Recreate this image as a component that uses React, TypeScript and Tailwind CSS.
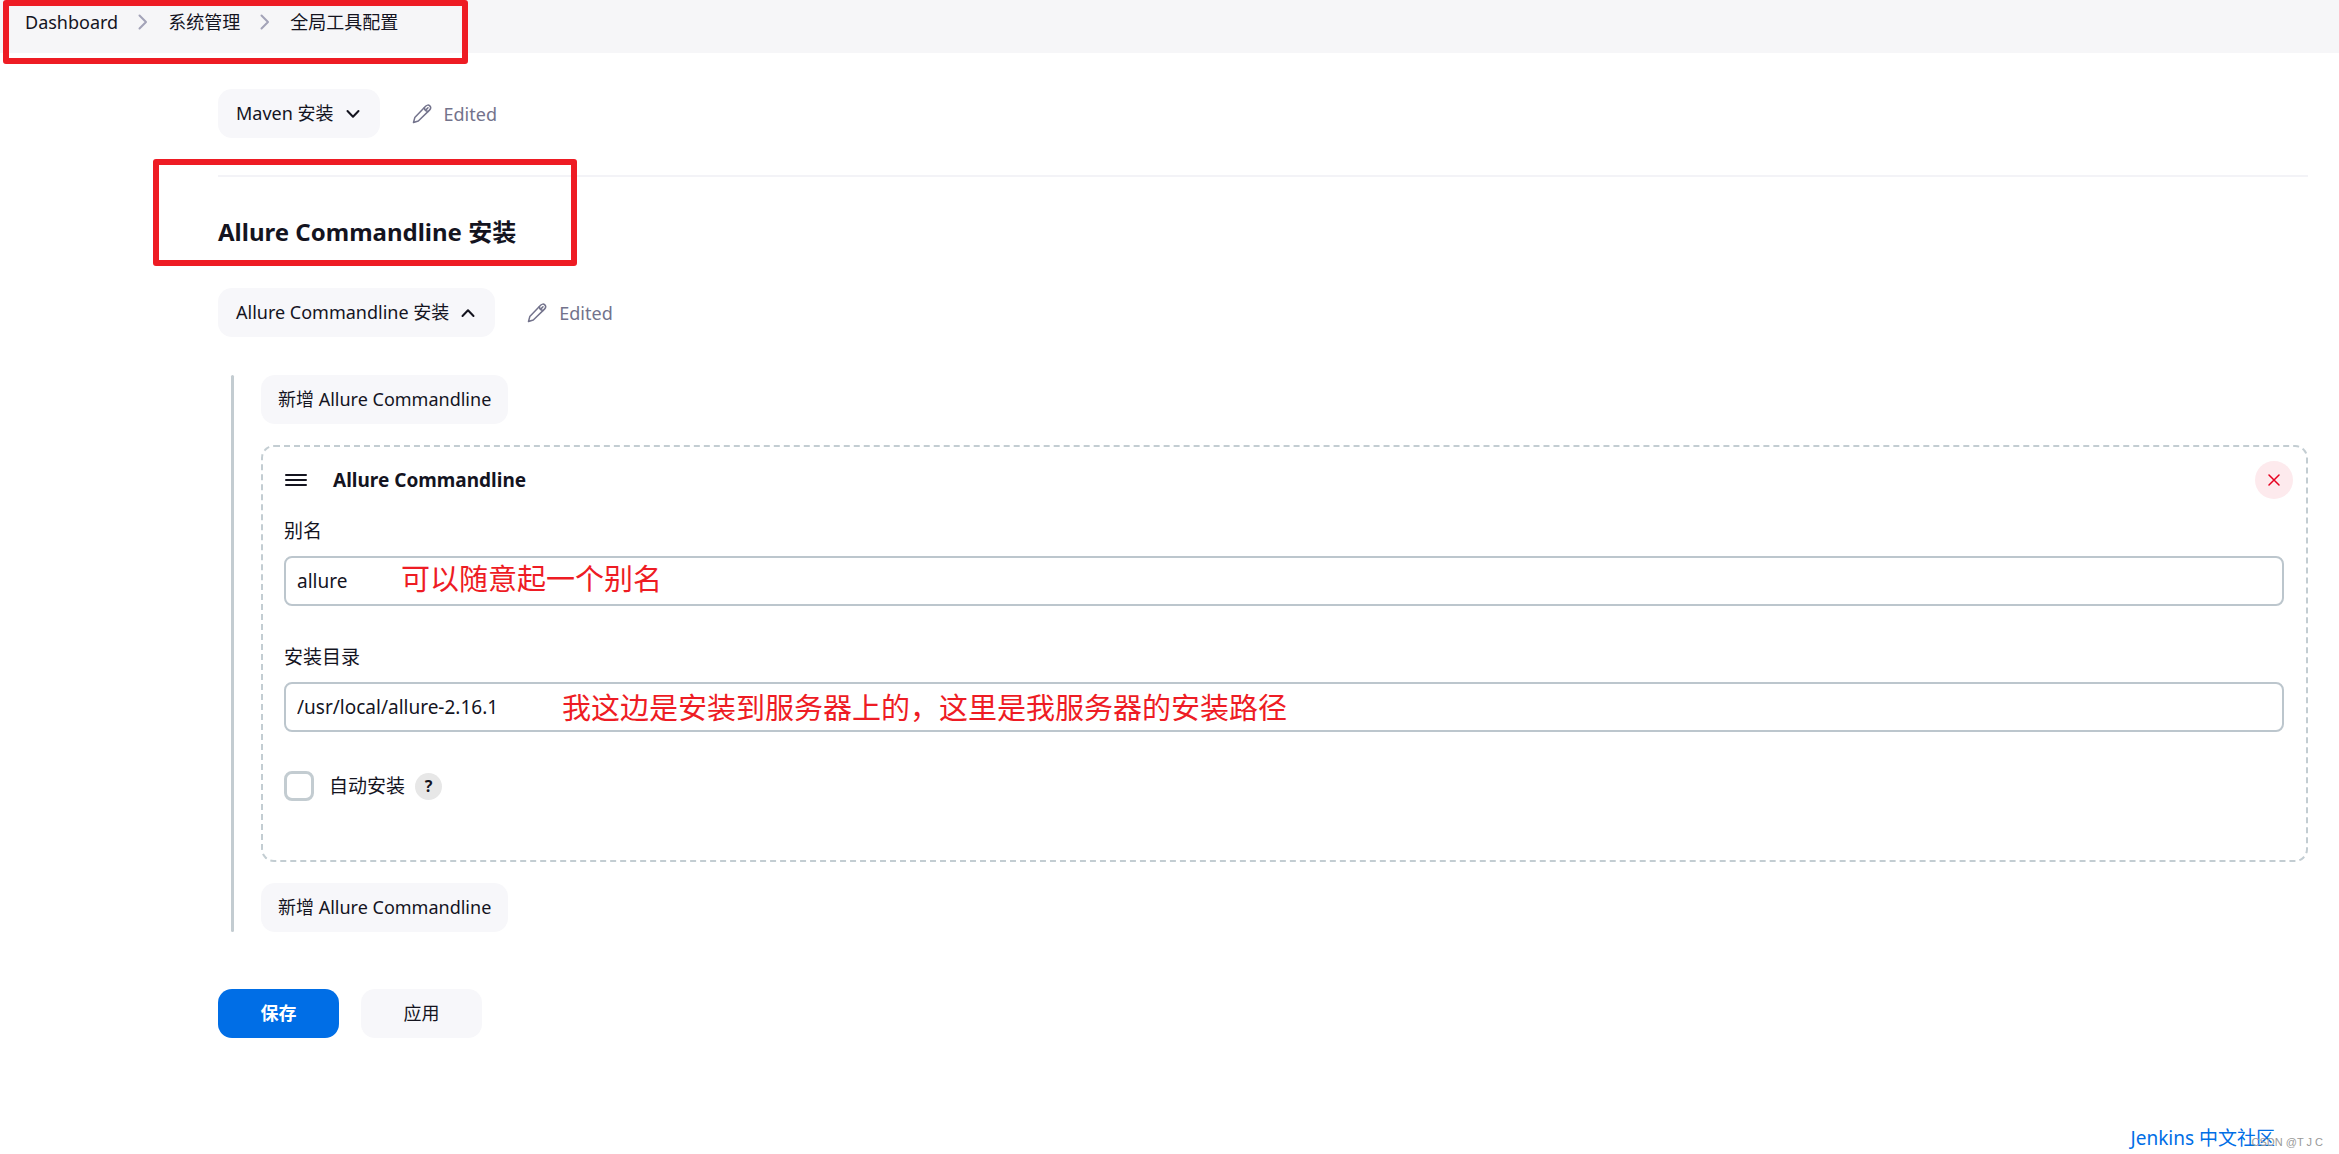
import { useState, type ReactNode } from "react";

const softButton =
  "flex h-[49px] items-center rounded-[14px] bg-[#f7f7fa] text-[18px] text-[#14141f] cursor-pointer whitespace-nowrap";

const inputStyle =
  "block h-[50px] w-full rounded-lg border-2 border-[#bcc6cd] bg-white pl-[11px] pr-3 text-[19px] text-[#14141f] outline-none";

function Separator() {
  return (
    <svg viewBox="0 0 10 16" className="h-4 w-[10px]" fill="none" stroke="#a3a3b8" strokeWidth="2" strokeLinecap="round" strokeLinejoin="round" aria-hidden="true">
      <path d="M1.5 1.5 8 8l-6.500 6.500" />
    </svg>
  );
}

function Chevron({ up = false }: { up?: boolean }) {
  return (
    <svg viewBox="0 0 14 10" className="h-[10px] w-[14px]" fill="none" stroke="#14141f" strokeWidth="2" strokeLinecap="round" strokeLinejoin="round" aria-hidden="true">
      <path d={up ? "M1.500 8 7 2.200 12.500 8" : "M1.500 2 7 7.800 12.500 2"} />
    </svg>
  );
}

function Pencil() {
  return (
    <svg viewBox="0 0 20 20" className="size-5" fill="none" stroke="#73738c" strokeWidth="1.500" strokeLinecap="round" strokeLinejoin="round" aria-hidden="true">
      <path d="M1.500 18.500 2.800 13.600 13.600 2.300c1.300-1.400 3-1.600 4.200-.4s1 2.900-.3 4.200L6.300 17Z" />
      <path d="M12.300 3.800c.3 2 1.700 3.400 3.700 3.700" />
      <path d="M14.200 5.600 16 3.800" />
    </svg>
  );
}

function Edited() {
  return (
    <span className="flex items-center gap-3 text-[18px] leading-6 text-[#73738c]">
      <Pencil />
      Edited
    </span>
  );
}

function Toggle({ label, open, onClick }: { label: string; open: boolean; onClick: () => void }) {
  return (
    <button type="button" aria-expanded={open} onClick={onClick} className={`${softButton} gap-3 pl-[18px] pr-5`}>
      {label}
      <Chevron up={open} />
    </button>
  );
}

function AddButton() {
  return (
    <button type="button" className={`${softButton} px-[17px]`}>
      新增 Allure Commandline
    </button>
  );
}

function Field({ id, label, value, children }: { id: string; label: string; value: string; children: ReactNode }) {
  return (
    <div>
      <label htmlFor={id} className="block text-[19px] leading-6">
        {label}
      </label>
      <div className="relative mt-[13px]">
        <input id={id} type="text" defaultValue={value} className={inputStyle} />
        {children}
      </div>
    </div>
  );
}

export default function App() {
  const [mavenOpen, setMavenOpen] = useState(false);
  const [allureOpen, setAllureOpen] = useState(true);

  return (
    <div className="relative min-h-screen bg-white font-['Noto_Sans','Noto_Sans_CJK_SC',sans-serif] text-[#14141f]">
      <header className="h-[53px] bg-[#f6f6f8]">
        <nav aria-label="breadcrumb">
          <ol className="flex items-center gap-5 pl-[25px] pt-[10px] text-[18px] leading-6">
            <li><a href="#dashboard">Dashboard</a></li>
            <li aria-hidden="true"><Separator /></li>
            <li><a href="#manage">系统管理</a></li>
            <li aria-hidden="true"><Separator /></li>
            <li><a href="#tools">全局工具配置</a></li>
          </ol>
        </nav>
      </header>
      <div className="pointer-events-none absolute left-[3px] top-0 h-16 w-[465px] rounded-[3px] border-[6px] border-[#ee1c24]" />

      <main className="pl-[218px] pr-[31px] pt-9">
        <div className="flex items-center gap-8">
          <Toggle label="Maven 安装" open={mavenOpen} onClick={() => setMavenOpen(!mavenOpen)} />
          <Edited />
        </div>

        <section className="relative mt-[37px] border-t-2 border-[#f3f3f7] pt-[39px]">
          <div className="pointer-events-none absolute -left-[65px] -top-[18px] h-[107px] w-[424px] rounded-[3px] border-[6px] border-[#ee1c24]" />
          <h2 className="text-[24px] font-bold leading-8">Allure Commandline 安装</h2>
          <div className="mt-10 flex items-center gap-8">
            <Toggle label="Allure Commandline 安装" open={allureOpen} onClick={() => setAllureOpen(!allureOpen)} />
            <Edited />
          </div>

          <div className="ml-[13px] mt-[38px] flex gap-[27px]">
            <div className="w-[3px] rounded-full bg-[#c3ccd1]" />
            <div className="flex flex-1 flex-col items-start gap-[21px]">
              <AddButton />
              <div className="w-full rounded-[13px] border-2 border-dashed border-[#c3cdd2] pb-[59px] pl-[21px] pr-[22px] pt-[14px]">
                <div className="flex items-center">
                  <svg viewBox="0 0 22 14" className="ml-px h-[14px] w-[22px]" stroke="#14141f" strokeWidth="2" strokeLinecap="round" aria-hidden="true">
                    <path d="M1 2h20M1 7h20M1 12h20" />
                  </svg>
                  <h3 className="ml-[26px] text-[19px] font-bold leading-6">Allure Commandline</h3>
                  <button type="button" aria-label="删除" className="-mr-[9px] ml-auto flex size-[38px] cursor-pointer items-center justify-center rounded-full bg-[#fdeaed]">
                    <svg viewBox="0 0 12 12" className="size-3" stroke="#e6001f" strokeWidth="1.500" strokeLinecap="round" aria-hidden="true">
                      <path d="m1 1 10 10M11 1 1 11" />
                    </svg>
                  </button>
                </div>

                <div className="mt-5 flex flex-col gap-[39px]">
                  <Field id="name" label="别名" value="allure">
                    <span className="pointer-events-none absolute left-[117px] top-[5px] whitespace-nowrap text-[29px] leading-9 text-[#ee1c24]">
                      可以随意起一个别名
                    </span>
                  </Field>
                  <Field id="home" label="安装目录" value="/usr/local/allure-2.16.1">
                    <span className="pointer-events-none absolute left-[278px] top-2 whitespace-nowrap text-[29px] leading-9 text-[#ee1c24]">
                      我这边是安装到服务器上的，这里是我服务器的安装路径
                    </span>
                  </Field>
                  <div className="flex items-center">
                    <input
                      id="auto"
                      type="checkbox"
                      className="size-[30px] cursor-pointer appearance-none rounded-lg border-[3px] border-[#c3ccd1] bg-white checked:bg-[#006ee6]"
                    />
                    <label htmlFor="auto" className="ml-[15px] text-[19px] leading-6">自动安装</label>
                    <button type="button" aria-label="帮助" className="ml-[10px] flex size-[27px] cursor-pointer items-center justify-center rounded-full bg-[#e7e7e7] text-[16px] font-bold">
                      ?
                    </button>
                  </div>
                </div>
              </div>
              <AddButton />
            </div>
          </div>
        </section>

        <div className="mt-[57px] flex gap-[22px]">
          <button type="button" className="h-[49px] w-[121px] cursor-pointer rounded-[14px] bg-[#006ee6] text-[18px] font-bold text-white">
            保存
          </button>
          <button type="button" className="h-[49px] w-[121px] cursor-pointer rounded-[14px] bg-[#f7f7fa] text-[18px]">
            应用
          </button>
        </div>
      </main>

      <footer className="flex justify-end pr-16 pt-[88px]">
        <a href="#community" className="text-[19px] leading-6 text-[#006ee6]">Jenkins 中文社区</a>
      </footer>
      <span className="pointer-events-none absolute bottom-1 right-4 text-[11px] leading-4 text-[#999999] font-['Liberation_Sans',sans-serif]">
        CSDN @T J C
      </span>
    </div>
  );
}
